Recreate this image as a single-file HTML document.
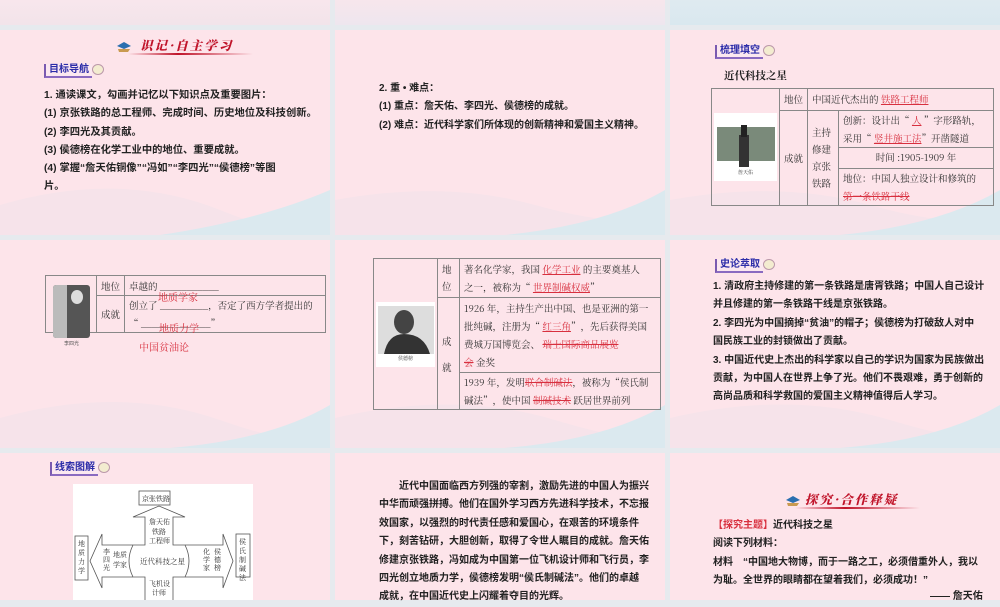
<!DOCTYPE html>
<html><head><meta charset="utf-8">
<style>
*{margin:0;padding:0;box-sizing:border-box}
body{width:1000px;height:600px;overflow:hidden;background:#e6eaee;position:relative;font-family:"Liberation Sans","Noto Sans CJK SC",sans-serif;color:#1a1a1a}
.s{position:absolute;background:#fde4ea;overflow:hidden}
.s svg.bg{position:absolute;left:0;top:0}
.a{position:absolute;white-space:nowrap}
.t{font-size:10px;line-height:18.3px;font-weight:bold;color:#222}
.tag{position:absolute;font-size:10px;font-weight:bold;color:#2c2ca8;border-left:2px solid #7a5ab0;border-bottom:2px solid #8a6ac0;padding:0 3px 0 3px;line-height:12px;background:#fbe8f0}
.tag:after{content:"";position:absolute;right:-12px;top:0;width:10px;height:9px;border-radius:50%;background:#f3ecd0;border:1px solid #b9a;}
.title{position:absolute;font-family:"Noto Serif CJK SC",serif;font-weight:900;font-style:italic;color:#c0142a;font-size:12.5px;letter-spacing:2px}
.uline{position:absolute;height:2px;background:linear-gradient(90deg,rgba(200,20,40,0),#c0142a 40%,rgba(200,20,40,0))}
.cap{position:absolute;width:14px;height:10px}
table{position:absolute;border-collapse:collapse;font-family:"Noto Serif CJK SC",serif;font-size:9.5px;color:#333}
td{border:1px solid #888;vertical-align:middle;padding:0 4px;line-height:19px}
.nw{white-space:nowrap}
.r{color:#d8303f}
.ph{background:#fff;display:flex;align-items:center;justify-content:center}
</style></head><body>

<div class="s" style="left:0;top:0;width:330px;height:25px;background:linear-gradient(180deg,#f8e6ec,#f2e4ea)"></div>
<div class="s" style="left:335px;top:0;width:330px;height:25px;background:linear-gradient(180deg,#f7e6ec,#eee6ee)"></div>
<div class="s" style="left:670px;top:0;width:330px;height:25px;background:linear-gradient(180deg,#dfeaf0,#d9e8ef)"></div>

<div class="s" style="left:0;top:30px;width:330px;height:205px">
<svg class="bg" width="330" height="205"><path d="M0 175 Q120 140 220 180 T330 190 L330 205 L0 205Z" fill="#f6e3ea"/><path d="M160 205 Q260 190 330 160 L330 205Z" fill="#dbe9ef"/></svg>
</div>
<div class="cap" style="left:116px;top:40px"><svg width="16" height="12"><path d="M2 8 L14 8 L12 11 L3 11Z" fill="#c99a50"/><path d="M1 5 L8 1 L15 5 L8 8Z" fill="#2a6fb0"/></svg></div>
<div class="title" style="left:140px;top:36px">识记·自主学习</div>
<div class="uline" style="left:128px;top:53px;width:125px"></div>
<div class="tag" style="left:44px;top:64px">目标导航</div>
<div class="a t" style="left:44px;top:87px;font-size:10.3px">1. 通读课文，勾画并记忆以下知识点及重要图片：<br>(1) 京张铁路的总工程师、完成时间、历史地位及科技创新。<br>(2) 李四光及其贡献。<br>(3) 侯德榜在化学工业中的地位、重要成就。<br>(4) 掌握“詹天佑铜像”“冯如”“李四光”“侯德榜”等图<br>片。</div>

<div class="s" style="left:335px;top:30px;width:330px;height:205px">
<svg class="bg" width="330" height="205"><path d="M0 170 Q110 150 200 175 T330 185 L330 205 L0 205Z" fill="#f6e3ea"/><path d="M170 205 Q270 195 330 160 L330 205Z" fill="#dbe9ef"/></svg>
</div>
<div class="a t" style="left:379px;top:80px">2. 重 • 难点：<br>(1) 重点：詹天佑、李四光、侯德榜的成就。<br>(2) 难点：近代科学家们所体现的创新精神和爱国主义精神。</div>

<div class="s" style="left:670px;top:30px;width:330px;height:205px">
<svg class="bg" width="330" height="205"><path d="M0 170 Q110 150 200 175 T330 185 L330 205 L0 205Z" fill="#f6e3ea"/><path d="M170 205 Q270 195 330 160 L330 205Z" fill="#dbe9ef"/></svg>
</div>
<div class="tag" style="left:715px;top:45px">梳理填空</div>
<div class="a" style="left:724px;top:68px;font-size:10.5px;font-weight:bold;font-family:'Noto Serif CJK SC',serif">近代科技之星</div>
<table style="left:711px;top:88px;width:283px;height:118px">
<tr style="height:22px"><td rowspan="4" style="width:68px;padding:2px"><div class="ph" style="height:68px;flex-direction:column"><svg width="58" height="50"><rect x="0" y="8" width="58" height="34" fill="#7a8a7a"/><rect x="22" y="16" width="10" height="32" fill="#333"/><rect x="24" y="6" width="6" height="12" fill="#222"/></svg><span style="font-size:5px;line-height:7px">詹天佑</span></div></td><td class="nw" style="width:28px">地位</td><td colspan="2">中国近代杰出的 <span class="r" style="text-decoration:underline">铁路工程师</span></td></tr>
<tr><td rowspan="3" class="nw">成就</td><td rowspan="3" style="width:31px;line-height:17px">主持<br>修建<br>京张<br>铁路</td><td style="line-height:18px">创新：设计出“ <span class="r"><u>人</u></span> ”字形路轨，<br>采用“ <span class="r"><u>竖井施工法</u></span>”开凿隧道</td></tr>
<tr><td style="text-align:center">时间 :1905-1909 年</td></tr>
<tr><td style="line-height:18px">地位：中国人独立设计和修筑的<br><span class="r"><s>第一条铁路干线</s></span></td></tr>
</table>

<div class="s" style="left:0;top:240px;width:330px;height:208px">
<svg class="bg" width="330" height="208"><path d="M0 178 Q120 145 220 180 T330 190 L330 208 L0 208Z" fill="#f6e3ea"/><path d="M170 208 Q270 200 330 165 L330 208Z" fill="#dbe9ef"/></svg>
</div>
<table style="left:45px;top:275px;width:281px;height:58px">
<tr style="height:20px"><td rowspan="2" style="width:51px;padding:0;vertical-align:top"></td><td class="nw" style="width:27px;line-height:18px">地位</td><td class="nw" style="line-height:18px">卓越的 ___________</td></tr>
<tr><td class="nw">成就</td><td class="nw" style="line-height:18px">创立了 _________，否定了西方学者提出的<br>“ _____________”</td></tr>
</table>
<div style="position:absolute;left:53px;top:285px;width:37px;height:53px;background:#555;border-radius:3px;overflow:hidden"><div style="position:absolute;left:0;top:0;width:14px;height:53px;background:#bbb"></div><div style="position:absolute;left:18px;top:5px;width:12px;height:14px;border-radius:50%;background:#ddd"></div></div>
<div class="a" style="left:64px;top:340px;font-size:5px;color:#555">李四光</div>
<div class="a r" style="left:158px;top:289px;font-size:10px;font-family:'Noto Serif CJK SC',serif">地质学家</div>
<div class="a r" style="left:159px;top:320px;font-size:10px;font-family:'Noto Serif CJK SC',serif">地质力学</div>
<div class="a r" style="left:139px;top:339px;font-size:10px;font-family:'Noto Serif CJK SC',serif">中国贫油论</div>

<div class="s" style="left:335px;top:240px;width:330px;height:208px">
<svg class="bg" width="330" height="208"><path d="M0 178 Q120 150 220 180 T330 190 L330 208 L0 208Z" fill="#f6e3ea"/><path d="M170 208 Q270 200 330 165 L330 208Z" fill="#dbe9ef"/></svg>
</div>
<table style="left:373px;top:258px;width:288px;height:149px">
<tr style="height:39px"><td rowspan="3" style="width:64px;padding:2px"><div class="ph" style="height:65px;flex-direction:column"><svg width="56" height="48"><rect width="56" height="48" fill="#ddd"/><ellipse cx="26" cy="16" rx="10" ry="12" fill="#444"/><path d="M6 48 Q10 28 26 28 Q46 28 52 48Z" fill="#333"/></svg><span style="font-size:5px;line-height:9px">侯德榜</span></div></td><td style="width:22px;line-height:17px">地<br>位</td><td style="line-height:18px">著名化学家，我国 <span class="r"><u>化学工业</u></span> 的主要奠基人<br>之一，被称为“ <span class="r"><u>世界制碱权威</u></span>”</td></tr>
<tr style="height:75px"><td rowspan="2" style="line-height:26px">成<br>就</td><td style="line-height:18px">1926 年，主持生产出中国、也是亚洲的第一<br>批纯碱，注册为“ <span class="r"><u>红三角</u></span>”，先后获得美国<br>费城万国博览会、 <span class="r"><s>瑞士国际商品展览</s></span><br><span class="r"><s>会</s></span> 金奖</td></tr>
<tr><td style="line-height:18px">1939 年，发明<span class="r"><s>联合制碱法</s></span>，被称为“侯氏制<br>碱法”，使中国 <span class="r"><s>制碱技术</s></span> 跃居世界前列</td></tr>
</table>

<div class="s" style="left:670px;top:240px;width:330px;height:208px">
<svg class="bg" width="330" height="208"><path d="M0 178 Q120 150 220 180 T330 190 L330 208 L0 208Z" fill="#f6e3ea"/><path d="M170 208 Q270 200 330 165 L330 208Z" fill="#dbe9ef"/></svg>
</div>
<div class="tag" style="left:715px;top:259px">史论萃取</div>
<div class="a t" style="left:713px;top:278px;line-height:18.4px">1. 清政府主持修建的第一条铁路是唐胥铁路；中国人自己设计<br>并且修建的第一条铁路干线是京张铁路。<br>2. 李四光为中国摘掉“贫油”的帽子；侯德榜为打破敌人对中<br>国民族工业的封锁做出了贡献。<br>3. 中国近代史上杰出的科学家以自己的学识为国家为民族做出<br>贡献，为中国人在世界上争了光。他们不畏艰难，勇于创新的<br>高尚品质和科学救国的爱国主义精神值得后人学习。</div>

<div class="s" style="left:0;top:453px;width:330px;height:147px"></div>
<div class="tag" style="left:50px;top:462px">线索图解</div>
<div style="position:absolute;left:73px;top:484px;width:180px;height:116px;background:#fff">
<svg width="180" height="116" style="position:absolute;left:0;top:0" font-family="Noto Serif CJK SC,serif" font-size="7" fill="#333">
<g fill="none" stroke="#555" stroke-width="0.8">
<rect x="66" y="7" width="31" height="14"/>
<path d="M72 116 V93 H29 V104 L17 77 L29 50 V61 H72 V33 H60 L86 22 L112 33 H100 V61 H150 V50 L160 77 L150 104 V93 H100 V116"/>
<rect x="2" y="52" width="13" height="44"/>
<rect x="163" y="50" width="14" height="43"/>
<path d="M60 61 Q52 77 60 93 M112 61 Q120 77 112 93"/>
</g>
<text x="69" y="17">京张铁路</text>
<text x="76" y="40">詹天佑</text><text x="79" y="50">铁路</text><text x="76" y="59">工程师</text>
<text x="67" y="80" font-size="7.5">近代科技之星</text>
<text x="76" y="102">飞机设</text><text x="79" y="111">计师</text>
<g font-size="7"><text x="5" y="62">地</text><text x="5" y="71">质</text><text x="5" y="80">力</text><text x="5" y="89">学</text>
<text x="166" y="60">侯</text><text x="166" y="69">氏</text><text x="166" y="78">制</text><text x="166" y="87">碱</text><text x="166" y="96">法</text>
<text x="30" y="70">李</text><text x="30" y="78">四</text><text x="30" y="86">光</text>
<text x="40" y="73">地质</text><text x="40" y="83">学家</text>
<text x="130" y="70">化</text><text x="130" y="78">学</text><text x="130" y="86">家</text>
<text x="141" y="70">侯</text><text x="141" y="78">德</text><text x="141" y="86">榜</text></g>
</svg></div>

<div class="s" style="left:335px;top:453px;width:330px;height:147px"></div>
<div class="a t" style="left:379px;top:478px;line-height:18.4px">　　近代中国面临西方列强的宰割，激励先进的中国人为振兴<br>中华而顽强拼搏。他们在国外学习西方先进科学技术，不忘报<br>效国家，以强烈的时代责任感和爱国心，在艰苦的环境条件<br>下，刻苦钻研，大胆创新，取得了令世人瞩目的成就。詹天佑<br>修建京张铁路，冯如成为中国第一位飞机设计师和飞行员，李<br>四光创立地质力学，侯德榜发明“侯氏制碱法”。他们的卓越<br>成就，在中国近代史上闪耀着夺目的光辉。</div>

<div class="s" style="left:670px;top:453px;width:330px;height:147px"></div>
<div class="cap" style="left:785px;top:494px"><svg width="16" height="12"><path d="M2 8 L14 8 L12 11 L3 11Z" fill="#c99a50"/><path d="M1 5 L8 1 L15 5 L8 8Z" fill="#2a6fb0"/></svg></div>
<div class="title" style="left:805px;top:490px">探究·合作释疑</div>
<div class="uline" style="left:795px;top:507px;width:125px"></div>
<div class="a t" style="left:713px;top:517px;line-height:18.4px"><span class="r">【探究主题】</span>近代科技之星<br>阅读下列材料：<br>材料　“中国地大物博，而于一路之工，必须借重外人，我以<br>为耻。全世界的眼睛都在望着我们，必须成功！”</div>
<div class="a t" style="left:930px;top:588px">—— 詹天佑</div>
</body></html>
